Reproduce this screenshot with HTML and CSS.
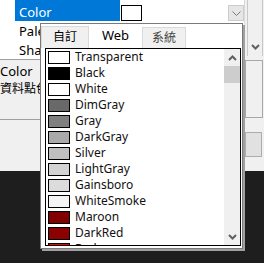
FILE: index.html
```html
<!DOCTYPE html>
<html>
<head>
<meta charset="utf-8">
<link rel="stylesheet" href="styles.css">
</head>
<body>
<div class="screen">
  <div class="top">
    <div class="grid">
      <div class="row sel">
        <div class="margin"></div>
        <div class="name">Color</div>
        <div class="value">
          <span class="vswatch"></span>
          <span class="fill"></span>
          <span class="ddbtn"><svg width="9" height="5" viewBox="0 0 9 5"><path d="M0.5 0.5 L4.5 4.5 L8.5 0.5" fill="none" stroke="#7a7a7a" stroke-width="1"/></svg></span>
        </div>
      </div>
      <div class="row">
        <div class="margin"></div>
        <div class="name">Palette</div>
        <div class="value"></div>
      </div>
      <div class="row">
        <div class="margin"></div>
        <div class="name">Shadow</div>
        <div class="value"></div>
      </div>
      <div class="desc">
        <div class="dtitle">Color</div>
        <div class="dtext">資料點色彩</div>
      </div>
      <div class="rest"></div>
    </div>
    <div class="side">
      <div class="sbox1"><svg width="9" height="6" viewBox="0 0 9 6"><path d="M1 1 L4.5 4.5 L8 1" fill="none" stroke="#606060" stroke-width="2"/></svg></div>
      <div class="sbox2"></div>
      <div class="sbox3"></div>
    </div>
  </div>

  <div class="popup">
    <div class="tabs">
      <div class="tab t1">自訂</div>
      <div class="tab active">Web</div>
      <div class="tab t3">系統</div>
    </div>
    <div class="page">
      <div class="list">
        <div class="items">
          <div class="item"><span class="sw" style="background:transparent"></span>Transparent</div>
          <div class="item"><span class="sw" style="background:#000000"></span>Black</div>
          <div class="item"><span class="sw" style="background:#ffffff"></span>White</div>
          <div class="item"><span class="sw" style="background:#696969"></span>DimGray</div>
          <div class="item"><span class="sw" style="background:#808080"></span>Gray</div>
          <div class="item"><span class="sw" style="background:#a9a9a9"></span>DarkGray</div>
          <div class="item"><span class="sw" style="background:#c0c0c0"></span>Silver</div>
          <div class="item"><span class="sw" style="background:#d3d3d3"></span>LightGray</div>
          <div class="item"><span class="sw" style="background:#dcdcdc"></span>Gainsboro</div>
          <div class="item"><span class="sw" style="background:#f5f5f5"></span>WhiteSmoke</div>
          <div class="item"><span class="sw" style="background:#800000"></span>Maroon</div>
          <div class="item"><span class="sw" style="background:#8b0000"></span>DarkRed</div>
          <div class="item"><span class="sw" style="background:#ff0000"></span>Red</div>
        </div>
        <div class="vscroll">
          <div class="arrow"><svg width="9" height="6" viewBox="0 0 9 6"><path d="M1 5 L4.5 1.5 L8 5" fill="none" stroke="#606060" stroke-width="2"/></svg></div>
          <div class="thumb"></div>
          <div class="track"></div>
          <div class="arrow"><svg width="9" height="6" viewBox="0 0 9 6"><path d="M1 1 L4.5 4.5 L8 1" fill="none" stroke="#606060" stroke-width="2"/></svg></div>
        </div>
      </div>
    </div>
  </div>
</div>
</body>
</html>
```

FILE: styles.css
```css
html, body {
  margin: 0;
  padding: 0;
  background: #1e1e1e;
}
body {
  width: 264px;
  height: 263px;
  overflow: hidden;
  font-family: "Noto Sans", "Noto Sans CJK TC", sans-serif;
  font-size: 12px;
  color: #000;
}
.screen {
  position: relative;
  width: 264px;
  height: 263px;
}
.top {
  display: flex;
  height: 171px;
}
.grid {
  width: 244px;
  display: flex;
  flex-direction: column;
  background: #f0f0f0;
}
.row {
  display: flex;
  height: 19px;
  background: #fff;
}
.row.sel {
  height: 21px;
}
.margin {
  width: 15px;
  background: #fff;
}
.name {
  width: 101px;
  padding-left: 4px;
  line-height: 21px;
  white-space: nowrap;
  overflow: hidden;
  font-size: 13px;
}
.row.sel .name {
  background: #0078d7;
  color: #fff;
  line-height: 24px;
  height: 21px;
}
.value {
  flex: 1;
  display: flex;
  align-items: flex-start;
  padding-left: 1px;
}
.vswatch {
  width: 19px;
  height: 14px;
  margin-top: 5px;
  border: 1px solid #000;
  background: #fff;
}
.fill {
  flex: 1;
}
.ddbtn {
  width: 14px;
  height: 14px;
  margin-top: 5px;
  margin-right: 0;
  border: 1px solid #cccccc;
  background: #e6e6e6;
  display: flex;
  align-items: center;
  justify-content: center;
}
.desc {
  border-top: 1px solid #a0a0a0;
  border-bottom: 1px solid #a0a0a0;
  background: #f0f0f0;
  padding-left: 0;
  padding-top: 3px;
  box-sizing: border-box;
  height: 61px;
  white-space: nowrap;
  overflow: hidden;
}
.dtitle {
  font-size: 13px;
  line-height: 17px;
}
.dtext {
  font-size: 12px;
  line-height: 17px;
  margin-left: 0;
}
.rest {
  flex: 1;
  background: #f0f0f0;
}
.side {
  width: 20px;
  background: #f0f0f0;
  border-left: 1px solid #dadada;
  box-sizing: border-box;
  display: flex;
  flex-direction: column;
}
.sbox1 {
  height: 56px;
  margin-left: 2px;
  width: 16px;
  border-left: 1px solid #c8c8c8;
  border-right: 1px solid #c8c8c8;
  box-sizing: border-box;
  display: flex;
  align-items: flex-end;
  justify-content: center;
  padding-bottom: 6px;
}
.sbox2 {
  margin-top: 4px;
  height: 58px;
  width: 18px;
  border: 1px solid #a8a8a8;
  box-sizing: border-box;
}
.sbox3 {
  margin-top: 14px;
  height: 25px;
  width: 17px;
  border: 1px solid #adadad;
  background: #e1e1e1;
  box-sizing: border-box;
}

/* popup */
.popup {
  position: absolute;
  left: 40px;
  top: 23px;
  width: 201px;
  height: 224px;
  border: 1px solid #7a7a7a;
  box-shadow: 2px 2px 0 #a0a0a0;
  background: #f0f0f0;
  display: flex;
  flex-direction: column;
}
.tabs {
  display: flex;
  align-items: flex-end;
  height: 24px;
  flex: none;
  background: #fff;
}
.tab {
  box-sizing: border-box;
  text-align: center;
  white-space: nowrap;
}
.tab.t1 {
  width: 48px;
  height: 22px;
  line-height: 20px;
  background: #f0f0f0;
  border: 1px solid #d9d9d9;
  border-bottom: none;
  font-size: 12px;
}
.tab.active {
  width: 53px;
  height: 24px;
  line-height: 22px;
  background: #fff;
  font-size: 13px;
}
.tab.t3 {
  width: 44px;
  height: 21px;
  line-height: 20px;
  background: #f0f0f0;
  border: 1px solid #d9d9d9;
  border-bottom: none;
  color: #444;
  font-size: 12px;
}
.page {
  flex: 1;
  min-height: 0;
  background: #fff;
  padding: 0 1px 2px 4px;
  display: flex;
}
.list {
  flex: 1;
  min-height: 0;
  border: 1px solid #000;
  display: flex;
  overflow: hidden;
  background: #fff;
}
.items {
  flex: 1;
  min-height: 0;
  overflow: hidden;
}
.item {
  height: 16px;
  display: flex;
  align-items: center;
  font-size: 12px;
  white-space: nowrap;
  line-height: 16px;
  color: #111;
}
.sw {
  width: 20px;
  height: 11px;
  border: 1px solid #000;
  margin: 0 5px 0 2px;
  flex: none;
}
.vscroll {
  width: 16px;
  background: #f0f0f0;
  display: flex;
  flex-direction: column;
}
.arrow {
  height: 17px;
  flex: none;
  display: flex;
  align-items: center;
  justify-content: center;
}
.thumb {
  height: 17px;
  flex: none;
  background: #cdcdcd;
}
.track {
  flex: 1;
}
```
